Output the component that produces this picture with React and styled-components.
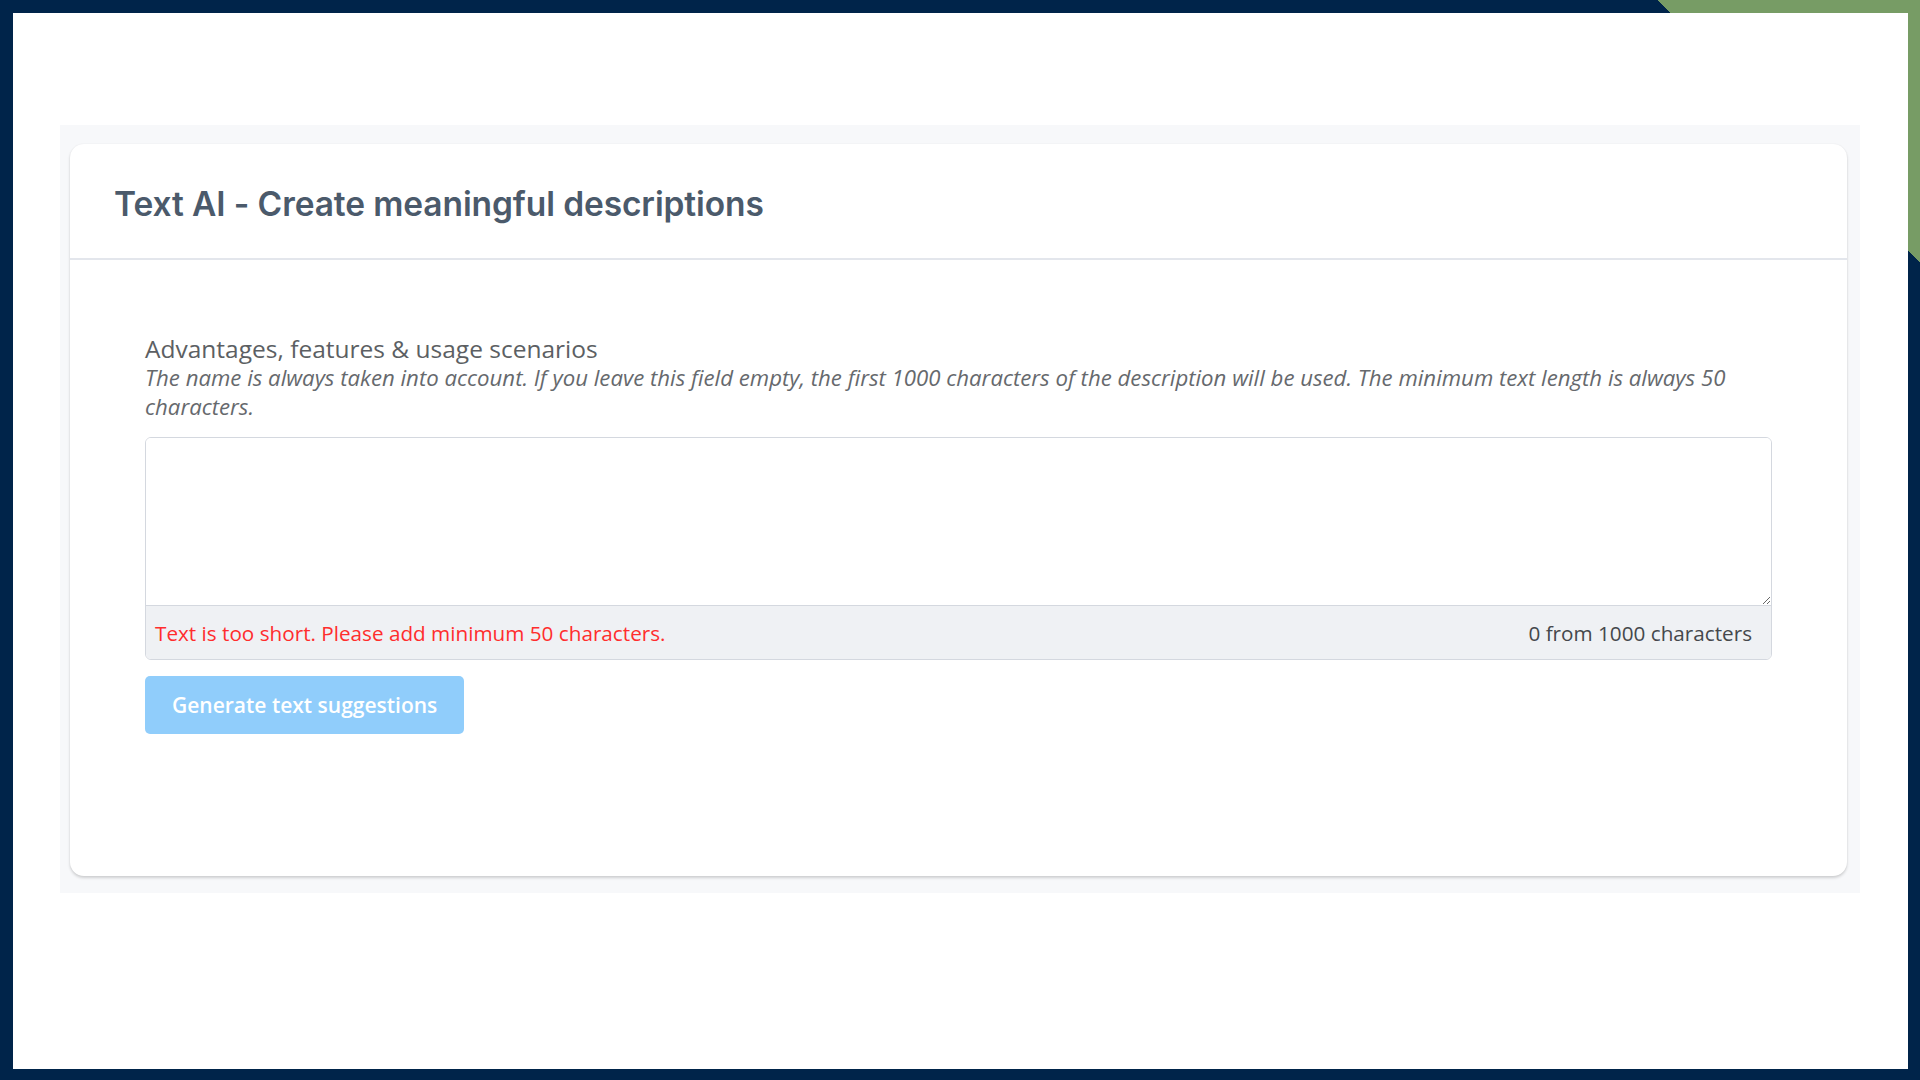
import React from 'react'
import styled, { createGlobalStyle } from 'styled-components'

const GlobalStyle = createGlobalStyle`
  html, body {
    margin: 0;
    padding: 0;
  }
  body {
    font-family: "Open Sans", "Liberation Sans", sans-serif;
  }
`

const Frame = styled.div`
  height: 100vh;
  box-sizing: border-box;
  padding: 13px 12px 11px 13px;
  display: flex;
  background-color: #00244a;
  background-image: linear-gradient(to bottom left, #779c65 50%, transparent 50%);
  background-size: 263px 263px;
  background-position: top right;
  background-repeat: no-repeat;
`

const Sheet = styled.div`
  flex: 1;
  background: #ffffff;
  display: flex;
  flex-direction: column;
  padding: 112px 48px 0 47px;
`

const Panel = styled.section`
  background: #f7f8fa;
  padding: 19px 13px 17px 10px;
`

const Card = styled.div`
  background: #fff;
  border-radius: 14px;
  box-shadow: 0 2px 3px rgba(0, 0, 0, 0.16), 0 0 2px rgba(0, 0, 0, 0.06);
`

const CardHeader = styled.header`
  height: 116px;
  box-sizing: border-box;
  display: flex;
  align-items: center;
  padding: 6px 44px 0;
  border-bottom: 2px solid #e3e6ec;
`

const Title = styled.h1`
  margin: 0;
  font-family: Inter, "Noto Sans", sans-serif;
  font-weight: 600;
  font-size: 33.5px;
  color: #4b5a6b;
  letter-spacing: -0.1px;
`

const CardBody = styled.div`
  padding: 74px 75px 142px;
`

const Label = styled.div`
  font-size: 24.5px;
  line-height: 29px;
  color: #5c5f63;
`

const Hint = styled.p`
  margin: 0 0 16px;
  font-size: 22.2px;
  line-height: 29px;
  font-style: italic;
  color: #66696d;
`

const Field = styled.div`
  border: 1px solid #d4d8df;
  border-radius: 6px;
  overflow: hidden;
`

const TextArea = styled.textarea`
  display: block;
  width: 100%;
  box-sizing: border-box;
  height: 167px;
  border: none;
  outline: none;
  padding: 10px 12px;
  font-family: inherit;
  font-size: 20px;
  resize: vertical;
`

const FieldFooter = styled.div`
  height: 54px;
  box-sizing: border-box;
  display: flex;
  align-items: center;
  justify-content: space-between;
  padding: 0 19px 0 9px;
  background: #eff1f4;
  border-top: 1px solid #d4d8df;
  font-size: 20.7px;
`

const Status = styled.span`
  color: ${props => (props.error ? '#ff2d2d' : '#45484c')};
`

const Button = styled.button`
  margin-top: 16px;
  height: 58px;
  padding: 0 27px;
  border: none;
  border-radius: 5px;
  background: #90cdfb;
  color: #fff;
  font-family: inherit;
  font-weight: 600;
  font-size: 21px;
  cursor: not-allowed;
`

const App = () => (
  <>
    <GlobalStyle />
    <Frame>
      <Sheet>
        <Panel>
          <Card>
            <CardHeader>
              <Title>Text AI - Create meaningful descriptions</Title>
            </CardHeader>
            <CardBody>
              <Label>Advantages, features &amp; usage scenarios</Label>
              <Hint>
                The name is always taken into account. If you leave this field empty, the first 1000 characters of the description will be used. The minimum text length is always 50 characters.
              </Hint>
              <Field>
                <TextArea />
                <FieldFooter>
                  <Status error>Text is too short. Please add minimum 50 characters.</Status>
                  <Status>0 from 1000 characters</Status>
                </FieldFooter>
              </Field>
              <Button disabled>Generate text suggestions</Button>
            </CardBody>
          </Card>
        </Panel>
      </Sheet>
    </Frame>
  </>
)

export default App
